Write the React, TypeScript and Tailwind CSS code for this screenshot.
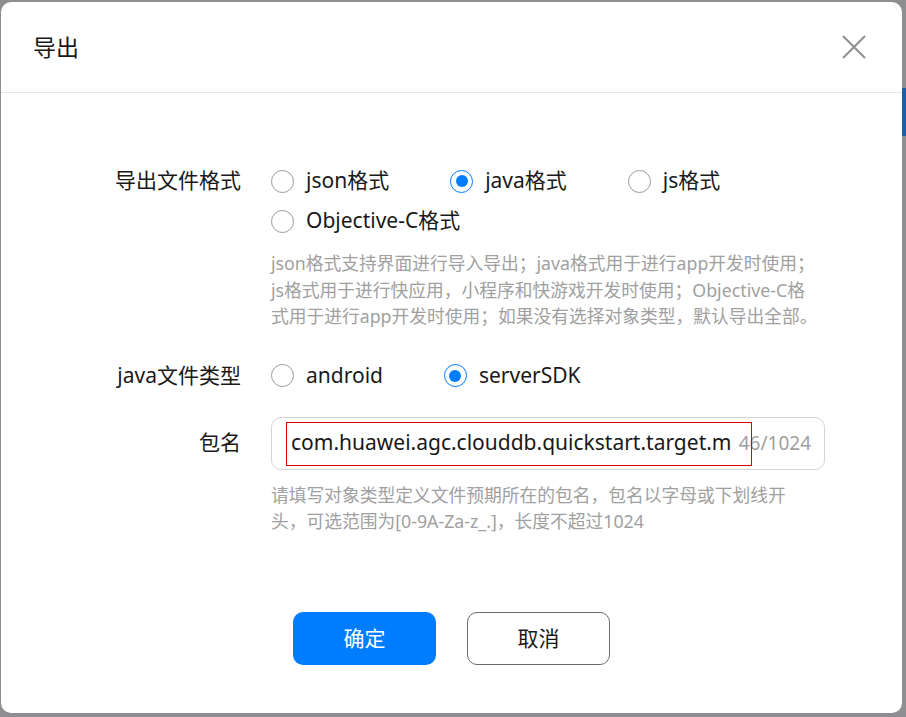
import { useState } from "react";

const FONT = "font-['Noto_Sans','Noto_Sans_CJK_SC',sans-serif]";

const Radio = ({ label, checked, onClick }: { label: string; checked: boolean; onClick: () => void }) => {
  return (
    <button onClick={onClick} className="flex h-[40px] items-center gap-[12px] text-[21px] text-[#191919]">
      <span
        className={`flex h-[23px] w-[23px] items-center justify-center rounded-full bg-white ${
          checked ? "border-[1.5px] border-[#007dff]" : "border border-[#9a9a9a]"
        }`}
      >
        {checked && <span className="h-[12px] w-[12px] rounded-full bg-[#007dff]" />}
      </span>
      <span>{label}</span>
    </button>
  );
};

const App = () => {
  const [format, setFormat] = useState("java");
  const [javaType, setJavaType] = useState("server");

  return (
    <div className={`h-[717px] w-[906px] overflow-hidden bg-[#8e8e91] pl-[1px] pt-[2px] relative ${FONT}`}>
      {/* stuff peeking out from behind the modal */}
      <div className="absolute right-0 top-[88px] h-[48px] w-[4px] bg-[#1f5ea6]" />

      <div className="relative flex h-[711px] w-[901px] flex-col rounded-[10px] bg-white">
        {/* Header */}
        <div className="flex h-[91px] items-center justify-between border-b border-[#e6e6e6] pl-[32px] pr-[36px]">
          <span className="text-[23px] text-[#191919]">导出</span>
          <svg width="24" height="24" viewBox="0 0 24 24" className="text-[#8e8e93]">
            <path d="M1 1 L23 23 M23 1 L1 23" stroke="currentColor" strokeWidth="2" fill="none" />
          </svg>
        </div>

        {/* Body */}
        <div className="grid grid-cols-[240px_554px] gap-x-[30px] pt-[68px]">
          <div className="flex h-[40px] items-center justify-end text-[21px] text-[#191919]">导出文件格式</div>
          <div>
            <div className="flex flex-wrap gap-x-[61px]">
              <Radio label="json格式" checked={format === "json"} onClick={() => setFormat("json")} />
              <Radio label="java格式" checked={format === "java"} onClick={() => setFormat("java")} />
              <Radio label="js格式" checked={format === "js"} onClick={() => setFormat("js")} />
              <Radio label="Objective-C格式" checked={format === "oc"} onClick={() => setFormat("oc")} />
            </div>
            <p className="mt-[9px] whitespace-nowrap text-[17.75px] leading-[26.5px] text-[#a0a0a0]">
              json格式支持界面进行导入导出；java格式用于进行app开发时使用；
              <br />
              js格式用于进行快应用，小程序和快游戏开发时使用；Objective-C格
              <br />
              式用于进行app开发时使用；如果没有选择对象类型，默认导出全部。
            </p>
          </div>

          <div className="mt-[26px] flex h-[40px] items-center justify-end text-[21px] text-[#191919]">java文件类型</div>
          <div className="mt-[26px] flex gap-x-[61px]">
            <Radio label="android" checked={javaType === "android"} onClick={() => setJavaType("android")} />
            <Radio label="serverSDK" checked={javaType === "server"} onClick={() => setJavaType("server")} />
          </div>

          <div className="mt-[21px] flex h-[53px] items-center justify-end text-[21px] text-[#191919]">包名</div>
          <div className="mt-[21px]">
            <div className="relative flex h-[53px] items-center justify-between rounded-[10px] border border-[#d4d4d4] pl-[19px] pr-[13px]">
              <span className="whitespace-nowrap text-[21px] text-[#191919]">com.huawei.agc.clouddb.quickstart.target.m</span>
              <span className="text-[19px] text-[#a0a0a0]">46/1024</span>
              <div className="absolute left-[14px] top-[4px] h-[44px] w-[466px] border border-[#e00000]" />
            </div>
            <p className="mt-[12px] whitespace-nowrap text-[17.75px] leading-[26.5px] text-[#a0a0a0]">
              请填写对象类型定义文件预期所在的包名，包名以字母或下划线开
              <br />
              头，可选范围为[0-9A-Za-z_.]，长度不超过1024
            </p>
          </div>
        </div>

        {/* Footer */}
        <div className="mt-auto mb-[48px] flex justify-center gap-[31px]">
          <button className="h-[53px] w-[143px] rounded-[10px] bg-[#007dff] text-[21px] text-white">确定</button>
          <button className="h-[53px] w-[143px] rounded-[10px] border border-[#6b6b6b] bg-white text-[21px] text-[#191919]">
            取消
          </button>
        </div>
      </div>
    </div>
  );
};

export default App;
